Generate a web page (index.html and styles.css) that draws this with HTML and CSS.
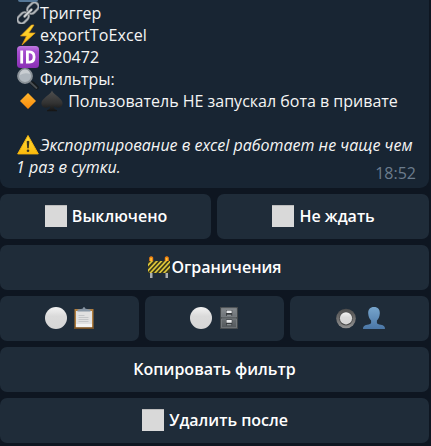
FILE: index.html
```
<!DOCTYPE html>
<html lang="ru">
<head>
<meta charset="utf-8">
<title>Триггер</title>
<link rel="stylesheet" href="styles.css">
</head>
<body>
<svg class="defs" aria-hidden="true">
  <defs>
    <linearGradient id="ball" x1="0" y1="0" x2="0" y2="1"><stop offset="0" stop-color="#f2f2f2"/><stop offset=".22" stop-color="#e6e6e6"/><stop offset=".42" stop-color="#dadada"/><stop offset="1" stop-color="#d6d6d6"/></linearGradient>
    <linearGradient id="purple" x1="0" y1="0" x2="0" y2="1"><stop offset="0" stop-color="#c07be0"/><stop offset=".25" stop-color="#a74fd0"/><stop offset="1" stop-color="#8a2fb5"/></linearGradient>
    <linearGradient id="gold" x1="0" y1="0" x2="0" y2="1"><stop offset="0" stop-color="#ffdc3c"/><stop offset="1" stop-color="#fbbb0c"/></linearGradient>
    <linearGradient id="orange" x1="0" y1="0" x2="0" y2="1"><stop offset="0" stop-color="#ffb62e"/><stop offset="1" stop-color="#f98a0c"/></linearGradient>
    <linearGradient id="spade" x1="0" y1="0" x2="0" y2="1"><stop offset="0" stop-color="#505050"/><stop offset=".6" stop-color="#333"/><stop offset="1" stop-color="#141414"/></linearGradient>
    <linearGradient id="person" x1="0" y1="0" x2="0" y2="1"><stop offset="0" stop-color="#77a5cc"/><stop offset="1" stop-color="#4a76a6"/></linearGradient>
    <linearGradient id="ring" x1="0" y1="0" x2="0" y2="1"><stop offset="0" stop-color="#4c4c4c"/><stop offset="1" stop-color="#929292"/></linearGradient>
    <linearGradient id="steel" x1="0" y1="0" x2="0" y2="1"><stop offset="0" stop-color="#858a8e"/><stop offset="1" stop-color="#53585b"/></linearGradient>
    <clipPath id="board"><path d="M0 5h22v12H0z"/></clipPath>
    <symbol id="square" viewBox="0 0 22 22"><path fill="#d9d9d9" d="M0 0h22v22H0z"/><path fill="#bcbcbc" d="M0 0h22v1H0z"/></symbol>
    <symbol id="circle" viewBox="0 0 22 22"><circle cx="11" cy="11" r="11" fill="url(#ball)"/></symbol>
  </defs>
</svg>
<main class="chat">
  <section class="message">
    <div class="line clipped"><i class="sliver"></i></div>
    <div class="line"><svg class="emoji" viewBox="0 0 22 22"><g fill="none" stroke-linecap="round"><g stroke="#747a80" stroke-width="2.700"><rect x="-6.200" y="-4" width="12.400" height="8" rx="4" transform="translate(6.100 15.900) rotate(-45)"/><rect x="-6.200" y="-4" width="12.400" height="8" rx="4" transform="translate(15.900 6.100) rotate(-45)"/></g><g stroke="#b4b9bd" stroke-width="1.400"><rect x="-6.200" y="-4" width="12.400" height="8" rx="4" transform="translate(6.100 15.900) rotate(-45)"/><rect x="-6.200" y="-4" width="12.400" height="8" rx="4" transform="translate(15.900 6.100) rotate(-45)"/></g><path stroke="#6b7176" stroke-width="3" d="M7.600 14.400l6.800-6.800"/><path stroke="#d6d9db" stroke-width="1.700" d="M7.600 14.400l6.800-6.800"/></g></svg><span>Триггер</span></div>
    <div class="line"><svg class="emoji" viewBox="0 0 22 22"><path fill="url(#gold)" stroke="#e79a16" stroke-width=".7" stroke-linejoin="round" d="M14.500 1L3.500 12h6L5 21 18.200 9h-6.400L17 1z"/></svg><span class="wide">exportToExcel</span></div>
    <div class="line"><svg class="emoji" viewBox="0 0 22 22"><rect width="22" height="22" rx="3.500" fill="url(#purple)"/><path fill="none" stroke="#fff" stroke-width="2.800" d="M4.700 4.500v13M10.400 5.900h2.100c3 0 4.600 1.900 4.600 5.100s-1.600 5.100-4.600 5.100h-2.100z"/></svg><span>&nbsp;320472</span></div>
    <div class="line"><svg class="emoji" viewBox="0 0 22 22"><path stroke="#15191c" stroke-width="4.400" stroke-linecap="round" d="M15.500 15.500l4 4"/><path stroke="#4a4f53" stroke-width="1.800" stroke-linecap="round" d="M13 14l6.500 6"/><circle cx="8" cy="8" r="7" fill="#aeb6bd" stroke="#8a9197" stroke-width="1.800"/><path fill="#c9ced2" d="M3 7a5 5 0 0 1 10-1Q8 4 3 7z"/></svg><span class="narrow">Фильтры:</span></div>
    <div class="line"><svg class="emoji" viewBox="0 0 22 22"><path fill="url(#orange)" d="M11 3l8 8-8 8-8-8z"/></svg><svg class="emoji spade" viewBox="0 0 22 22"><path fill="url(#spade)" d="M11 .5C12.600 5 22 8.600 21.600 13.700c-.3 4.200-5.800 5.200-8.900 2.300.2 2.300 1 3.500 3.300 4.300v.9H6v-.9c2.300-.8 3.100-2 3.300-4.300-3.100 2.900-8.600 1.900-8.900-2.300C0 8.600 9.400 5 11 .5z"/></svg><span>&nbsp;Пользователь НЕ запускал бота в привате</span></div>
    <div class="line"></div>
    <div class="line note"><svg class="emoji" viewBox="0 0 22 22"><path fill="url(#gold)" stroke="#f7b60e" stroke-width="1" stroke-linejoin="round" d="M11 1.500l10.300 18.400H.7z"/><path fill="#3c3620" d="M9.700 7.200q1.300-1 2.600 0l-.5 7h-1.600z"/><circle cx="11" cy="16.700" r="1.300" fill="#3c3620"/></svg><span>Экспортирование в excel работает не чаще чем</span></div>
    <div class="line note last"><span>1 раз в сутки.</span><time class="time">18:52</time></div>
  </section>
  <nav class="keyboard">
    <div class="row two">
      <button class="key labelled"><svg class="icon"><use href="#square"/></svg><span>&nbsp;Выключено</span></button>
      <button class="key labelled"><svg class="icon"><use href="#square"/></svg><span>&nbsp;Не ждать</span></button>
    </div>
    <div class="row">
      <button class="key labelled"><svg class="icon" viewBox="0 0 22 22"><path fill="#a8adb0" d="M2 16h2.500v6H2zM17.500 16H20v6h-2.500z"/><path fill="#f08312" d="M1.200 1.500q2-2.500 4 0V5h-4zM16.800 1.500q2-2.500 4 0V5h-4z"/><path fill="#ffc438" d="M2.300 2h1.600v3H2.300zM17.900 2h1.600v3h-1.600z"/><path fill="#39381d" d="M0 5h22v12H0z"/><path clip-path="url(#board)" stroke="#dfc83a" stroke-width="1.700" fill="none" d="M-2 11.500L5 4M-2 17L9.500 4.500M1.800 17.500L14 4.500M6.500 17.500L18.500 4.500M11 17.500L23 4.500M15.500 17.500L24 8.500"/></svg><span>Ограничения</span></button>
    </div>
    <div class="row three">
      <button class="key pair"><svg class="icon"><use href="#circle"/></svg><svg class="icon" viewBox="0 0 22 22"><path fill="#b17d3c" d="M1.500 2h19v20h-19z"/><path fill="#755026" d="M1.500 20.300h19V22h-19z"/><path fill="#e1e1e1" d="M3 4h16v16.200H3z"/><path fill="#fff" opacity=".6" d="M3 17h16v3H3z"/><path stroke="#c4c6c8" stroke-width="1" d="M5.500 8.500h6M5.500 10.500h10M5.500 12.500h10M5.500 14.500h10"/><path fill="#8795a3" d="M4.500 4.500V2.500l5-.8q1.500-3.400 3 0l5 .8v2z"/></svg></button>
      <button class="key pair"><svg class="icon"><use href="#circle"/></svg><svg class="icon" viewBox="0 0 22 22"><path fill="#43484b" d="M2 0h18v22H2z"/><path fill="url(#steel)" stroke="#8b9094" stroke-width=".6" d="M3.500 1.200h15v8.900h-15zM3.500 11.800h15v8.900h-15z"/><path fill="#373b3e" d="M8 3h6.200v6H8zM8 12.600h6.200v6H8z"/><path fill="#e8eaeb" d="M8.500 3.500h5.200v2.600H8.500zM8.500 13.100h5.200v2.600H8.500z"/><path fill="#a5aaad" d="M8.800 7.700h4.600v1H8.800zM8.800 17.300h4.600v1H8.800z"/></svg></button>
      <button class="key pair"><svg class="icon" viewBox="0 0 22 22"><circle cx="11" cy="11.500" r="9.800" fill="url(#ring)"/><circle cx="11" cy="11.500" r="6.900" fill="#4e4e4e"/><circle cx="11" cy="11.300" r="6.100" fill="url(#ball)"/></svg><svg class="icon" viewBox="0 0 22 22"><path fill="url(#person)" d="M11 0c4 0 6 2.600 5.800 6.500-.2 3.300-1.400 5.500-2.900 7v2.200c0 1.300 1.600 1.600 4 2.100 3 .7 4.100 1.700 4.100 4.200H0c0-2.500 1.100-3.500 4.100-4.200 2.400-.5 4-.8 4-2.100v-2.200c-1.500-1.500-2.700-3.700-2.900-7C5 2.600 7 0 11 0z"/></svg></button>
    </div>
    <div class="row"><button class="key">Копировать фильтр</button></div>
    <div class="row"><button class="key labelled"><svg class="icon"><use href="#square"/></svg><span>&nbsp;Удалить после</span></button></div>
  </nav>
</main>
</body>
</html>
```
FILE: styles.css
```
* { box-sizing: border-box; }
body {
  margin: 0;
  background: #0e1621;
  color: #f5f5f5;
  font: 16px/22px "Open Sans", "Noto Sans", sans-serif;
  overflow: hidden;
}
.defs { position: absolute; width: 0; height: 0; }
.chat { width: 429px; }
.message {
  height: 188px;
  padding: 0 13px 0 17px;
  background: #182533;
  border-radius: 0 0 9px 9px;
}
.line { display: flex; height: 22px; white-space: pre; }
.clipped { height: 2px; }
.sliver { width: 20px; height: 2px; margin-left: 1px; background: #557797; border-radius: 0 0 2px 2px; }
.emoji { flex: none; width: 22px; height: 22px; margin-right: 1px; }
.spade { margin: 0 1px 0 1px; }
.wide { letter-spacing: 0.12px; }
.narrow { letter-spacing: -0.1px; }
.note { font-style: italic; }
.last { margin-left: -1px; }
.time { margin: 6px 0 0 auto; color: #6b7c8d; font-style: normal; }
.keyboard { display: grid; gap: 6px; margin-top: 6px; }
.row { display: grid; grid-template-columns: 1fr; gap: 6px; }
.two { grid-template-columns: 211px 212px; }
.three { grid-template-columns: repeat(3, 1fr); }
.key {
  display: flex;
  align-items: center;
  justify-content: center;
  height: 45px;
  padding: 0 0 2px;
  border: 0;
  border-radius: 7px;
  background: #1f2c39;
  color: #fff;
  font: 600 16px/22px "Open Sans", "Noto Sans", sans-serif;
  white-space: pre;
}
.icon { flex: none; width: 22px; height: 22px; }
.labelled { gap: 1px; padding-left: 1px; }
.pair { gap: 6px; }
```
